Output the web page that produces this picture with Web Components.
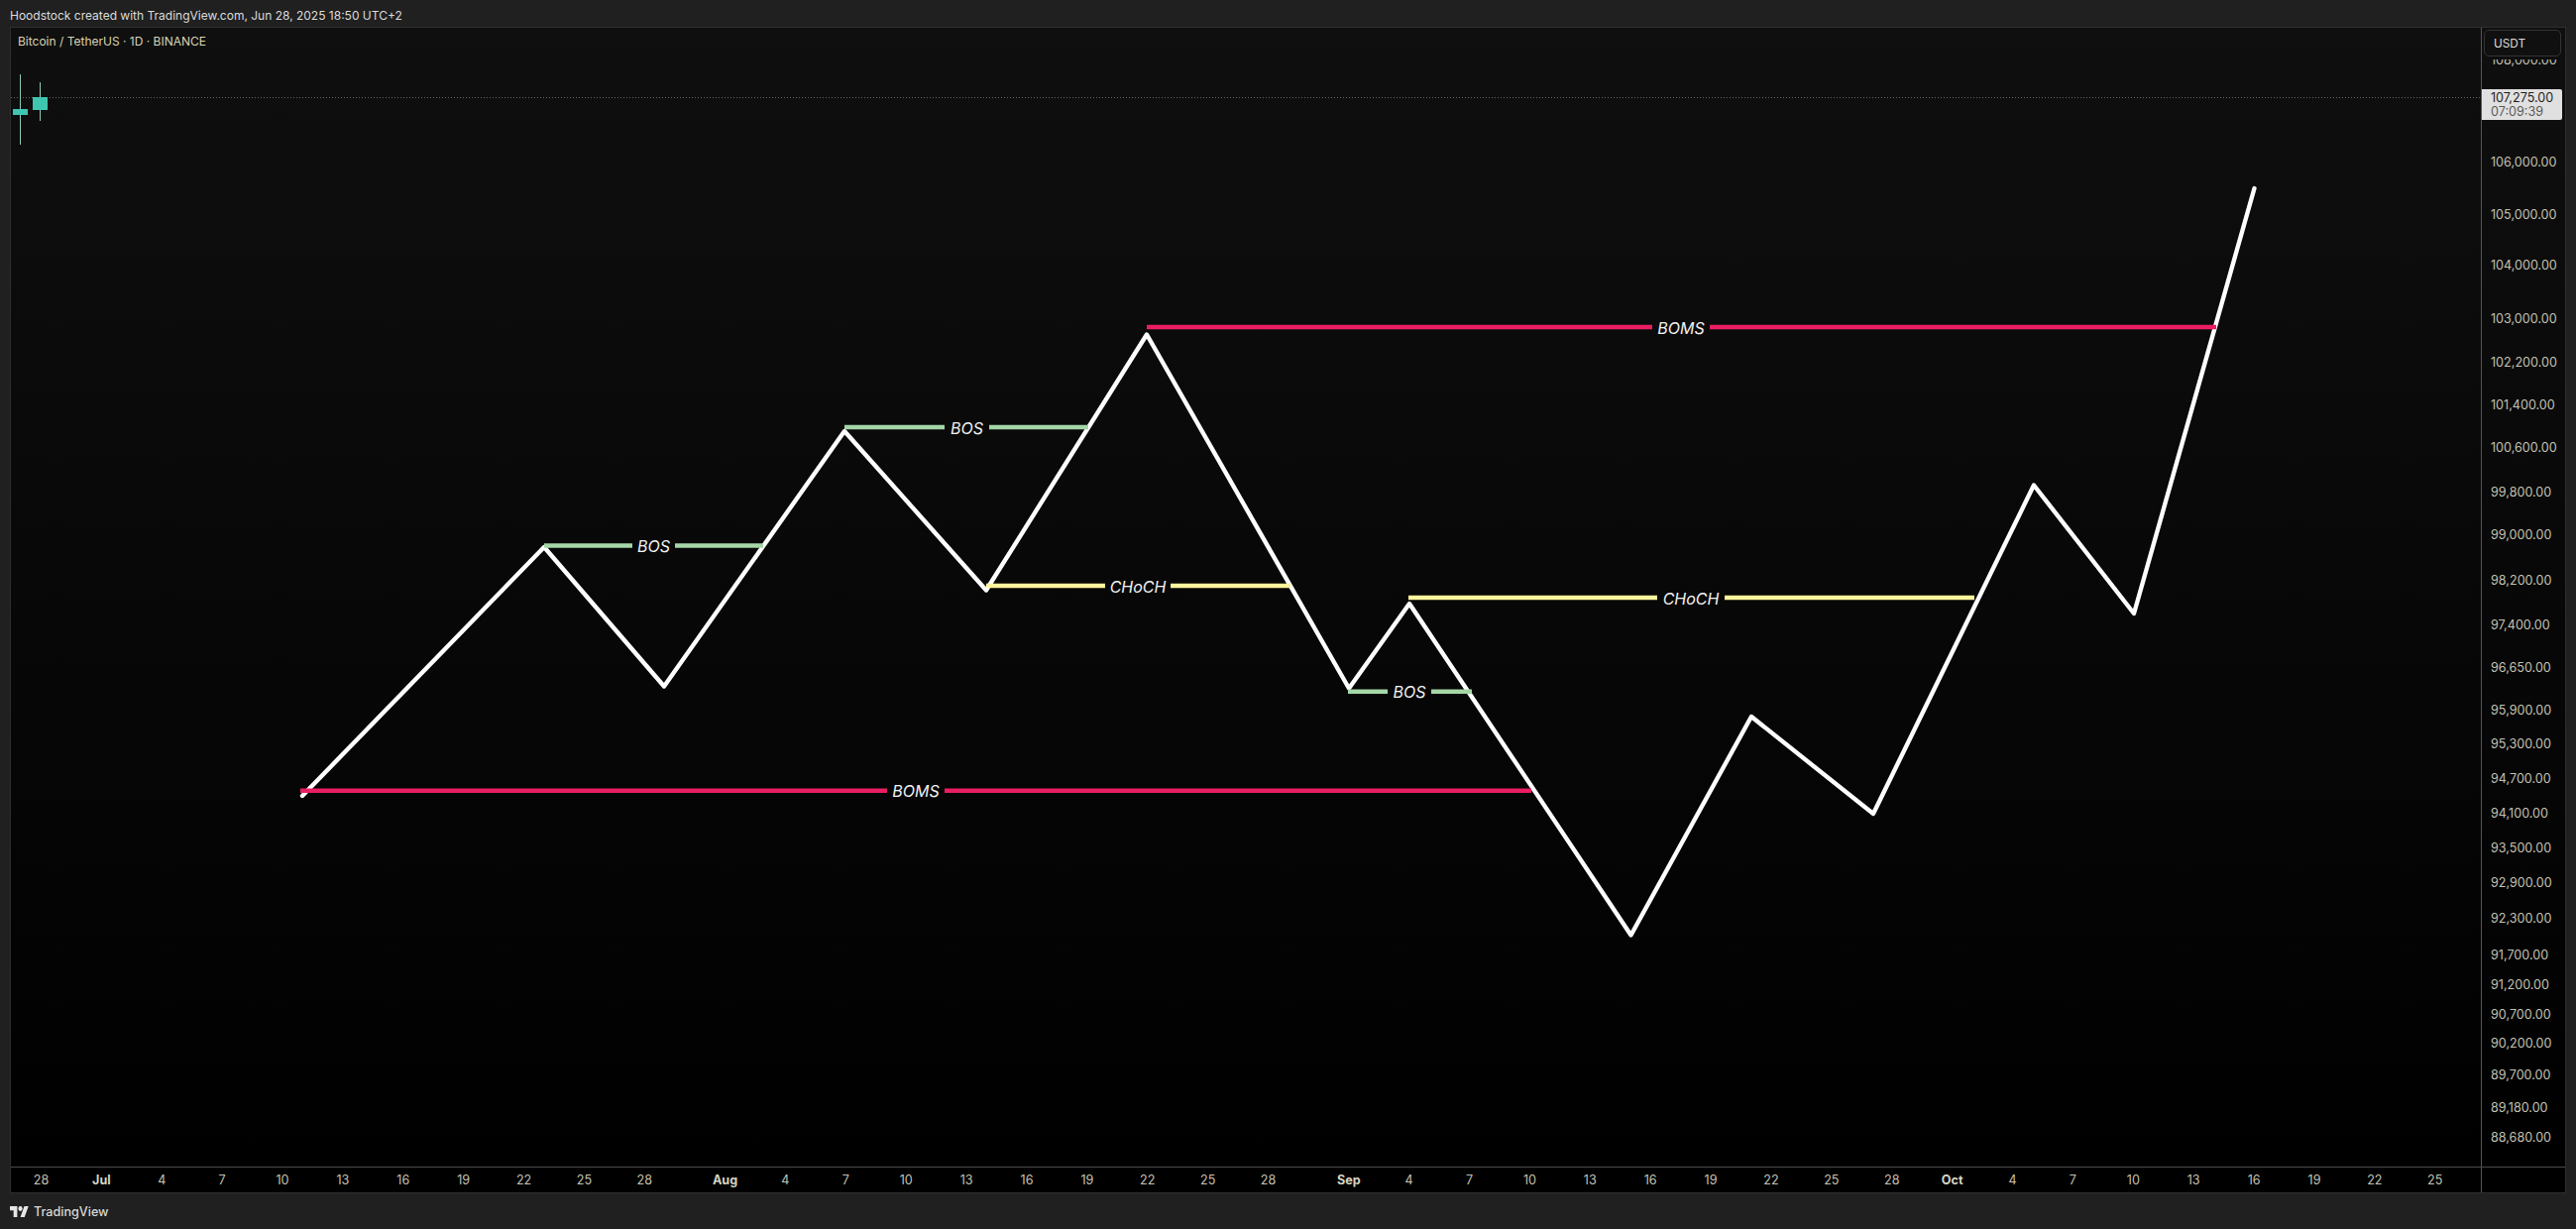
<!DOCTYPE html>
<html>
<head>
<meta charset="utf-8">
<title>BTCUSDT</title>
<style>
  html, body { margin: 0; height: 100%; background: #202020; }
  body { font-family: Inter, "Noto Sans", sans-serif; }
</style>
</head>
<body>
<tv-snapshot>
  <span slot="header">Hoodstock created with TradingView.com, Jun 28, 2025 18:50 UTC+2</span>
</tv-snapshot>

<script>
class TvBrand extends HTMLElement {
  constructor() {
    super();
    this.attachShadow({ mode: "open" });
  }
  connectedCallback() {
    this.shadowRoot.innerHTML = /*html*/ `
    <style>
      :host { display: flex; align-items: center; gap: 5px; height: 36px; padding: 0 10px; color: #d9d9d9; font-size: 12.6px; font-weight: 500; }
      svg { width: 19px; height: 11px; fill: #e6e6e6; }
    </style>
    <svg viewBox="0 4 36 18" preserveAspectRatio="none"><path d="M14 22H7V11H0V4h14v18zM28 22h-8l7.5-18h8L28 22z"/><circle cx="20" cy="8" r="4"/></svg>
    <span>TradingView</span>`;
  }
}

class TimeAxis extends HTMLElement {
  constructor() {
    super();
    this.attachShadow({ mode: "open" });
  }
  connectedCallback() {
    const ticks = "28 Jul 4 7 10 13 16 19 22 25 28 Aug 4 7 10 13 16 19 22 25 28 Sep 4 7 10 13 16 19 22 25 28 Oct 4 7 10 13 16 19 22 25".split(" ");
    const html = ticks.map((t) => {
      const month = isNaN(t);
      const long = t === "Aug" || t === "Sep"; // 31 day month, one day more before the tick
      return `<span class="${month ? "m" : ""} ${long ? "long" : ""}">${t}</span>`;
    }).join("");
    this.shadowRoot.innerHTML = /*html*/ `
    <style>
      :host { display: flex; align-items: center; box-sizing: border-box; height: 26px; background: #000; border-top: 1px solid #4a4a4a; color: #c4c2b2; font-size: 12.6px; overflow: hidden; }
      span { flex: 0 0 60.9px; text-align: center; }
      .m { font-weight: 700; color: #d6d4c2; }
      .long { margin-left: 20.3px; }
    </style>
    ${html}`;
  }
}

class PriceAxis extends HTMLElement {
  constructor() {
    super();
    this.attachShadow({ mode: "open" });
  }
  connectedCallback() {
    const rows = [
      ["108,000.00", 60], ["106,000.00", 162.6], ["105,000.00", 215.6], ["104,000.00", 267], ["103,000.00", 321.5],
      ["102,200.00", 364.6], ["101,400.00", 407.7], ["100,600.00", 451], ["99,800.00", 495.6], ["99,000.00", 538.7],
      ["98,200.00", 585], ["97,400.00", 629.7], ["96,650.00", 672.7], ["95,900.00", 715.7], ["95,300.00", 749.7],
      ["94,700.00", 784.7], ["94,100.00", 820], ["93,500.00", 855], ["92,900.00", 890], ["92,300.00", 926.5],
      ["91,700.00", 963], ["91,200.00", 993], ["90,700.00", 1022.7], ["90,200.00", 1052.5], ["89,700.00", 1084],
      ["89,180.00", 1116.7], ["88,680.00", 1147.3],
    ];
    const html = rows.map(([text, y], i) => {
      const next = rows[i + 1] ? rows[i + 1][1] : y + 16;
      return `<div style="height:${(next - y).toFixed(1)}px">${text}</div>`;
    }).join("");
    this.shadowRoot.innerHTML = /*html*/ `
    <style>
      :host { display: block; position: relative; border-left: 1px solid #555; color: #c4c2b2; font-size: 12.6px; line-height: 16px; overflow: hidden; }
      .rows { padding: 25px 0 0 9px; }
      .unit { position: absolute; top: 2px; left: 2px; width: 78px; height: 27px; box-sizing: border-box; padding-left: 9px;
        display: flex; align-items: center; border: 1px solid #333; border-radius: 5px; background: #101010; color: #dcdcdc; font-size: 11.8px; box-shadow: 0 3px 0 #0e0e0e; }
      .last { position: absolute; top: 62px; left: 0; width: 81px; height: 31px; box-sizing: border-box; padding: 0 0 0 9px;
        background: #e0e0e0; border-radius: 0 2px 2px 0; color: #1e1e1e; line-height: 14px; display: flex; flex-direction: column; justify-content: center; }
      .last small { font-size: 12.6px; color: #5a5a5a; }
    </style>
    <div class="rows">${html}</div>
    <div class="unit">USDT</div>
    <div class="last"><span>107,275.00</span><small>07:09:39</small></div>`;
  }
}

class ZigzagPane extends HTMLElement {
  constructor() {
    super();
    this.attachShadow({ mode: "open" });
  }
  connectedCallback() {
    const zig = "305,803 549,552 670,692.5 852,435 995,595.5 1157,337.5 1361,694.5 1422,609 1645.5,943.5 1767,723 1890,821 2052,489.5 2153,619 2274.5,190";
    const levels = [
      ["BOMS", "#e91e63", 797.7, 303, 1545, 895, 953],
      ["BOMS", "#e91e63", 330, 1157, 2236, 1667, 1725],
      ["BOS", "#a5d6a7", 550.5, 549, 770, 638, 681],
      ["BOS", "#a5d6a7", 431, 852, 1098, 953, 998],
      ["BOS", "#a5d6a7", 697.7, 1360, 1485, 1400, 1444],
      ["CHoCH", "#fff59d", 591, 995, 1302, 1115, 1181],
      ["CHoCH", "#fff59d", 603, 1421, 1992, 1672, 1740],
    ];
    const lines = levels.map(([name, color, y, x1, x2, g1, g2]) => `
      <path d="M${x1} ${y}H${g1}M${g2} ${y}H${x2}" stroke="${color}" stroke-width="4.6" fill="none"/>
      <text x="${(g1 + g2) / 2}" y="${y + 0.5}">${name}</text>`).join("");
    this.shadowRoot.innerHTML = /*html*/ `
    <style>
      :host { display: block; position: relative; overflow: hidden; }
      svg { position: absolute; inset: 0; width: 100%; height: 100%; }
      text { fill: #f2f2f2; font: italic 16px Inter, sans-serif; text-anchor: middle; dominant-baseline: central; }
      .legend { position: absolute; left: 7px; top: 6px; color: #d8d4b4; font-size: 12px; line-height: 16px; }
    </style>
    <svg viewBox="11 28 2492 1149" preserveAspectRatio="none">
      <path d="M11 98.5H2503" stroke="#666" stroke-width="1" stroke-dasharray="1 2"/>
      <path d="M20.5 75V146M40.5 83V122" stroke="#8fc9bd" stroke-width="1"/>
      <rect x="13" y="110" width="15" height="6" fill="#3fc6b0"/>
      <rect x="33" y="98" width="15" height="13" fill="#3fc6b0"/>
      <polyline points="${zig}" fill="none" stroke="#fff" stroke-width="4.4" stroke-linejoin="round" stroke-linecap="round"/>
      ${lines}
    </svg>
    <div class="legend">Bitcoin / TetherUS · 1D · BINANCE</div>`;
  }
}

class TvChart extends HTMLElement {
  constructor() {
    super();
    this.attachShadow({ mode: "open" });
  }
  connectedCallback() {
    this.shadowRoot.innerHTML = /*html*/ `
    <style>
      :host { display: grid; flex: 1; min-height: 0; margin: 0 10px; box-sizing: border-box; grid-template-columns: 1fr 85px; grid-template-rows: 1fr 26px;
        border: 1px solid #2e2e2e; background: linear-gradient(#0f0f0f, #000 100%); }
      .corner { background: #000; border-left: 1px solid #555; border-top: 1px solid #4a4a4a; }
    </style>
    <zigzag-pane></zigzag-pane>
    <price-axis></price-axis>
    <time-axis></time-axis>
    <div class="corner"></div>`;
  }
}

class TvSnapshot extends HTMLElement {
  constructor() {
    super();
    this.attachShadow({ mode: "open" });
  }
  connectedCallback() {
    this.shadowRoot.innerHTML = /*html*/ `
    <style>
      :host { display: flex; flex-direction: column; height: 1240px; background: #202020; }
      header { display: flex; align-items: center; height: 27px; padding: 4px 10px 0; box-sizing: border-box; color: #dcdcdc; font-size: 12px; flex: none; }
    </style>
    <header><slot name="header"></slot></header>
    <tv-chart></tv-chart>
    <tv-brand></tv-brand>`;
  }
}

customElements.define("tv-brand", TvBrand);
customElements.define("time-axis", TimeAxis);
customElements.define("price-axis", PriceAxis);
customElements.define("zigzag-pane", ZigzagPane);
customElements.define("tv-chart", TvChart);
customElements.define("tv-snapshot", TvSnapshot);
</script>
</body>
</html>
